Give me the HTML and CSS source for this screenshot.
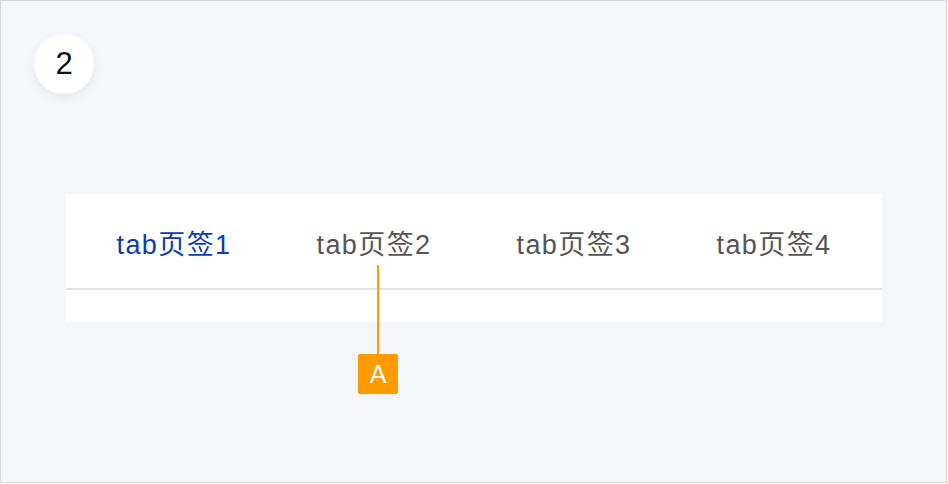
FILE: index.html
```html
<!DOCTYPE html>
<html lang="zh">
<head>
<meta charset="utf-8">
<link rel="stylesheet" href="styles.css">
</head>
<body>
<div class="frame">
  <div class="step">2</div>
  <div class="panel">
    <div class="tabs">
      <div class="tab active">tab页签1</div>
      <div class="tab">tab页签2</div>
      <div class="tab">tab页签3</div>
      <div class="tab">tab页签4</div>
    </div>
    <div class="panel-body"></div>
    <div class="marker">
      <div class="marker-line"></div>
      <div class="marker-tag">A</div>
    </div>
  </div>
</div>
</body>
</html>
```

FILE: styles.css
```css
html, body {
  margin: 0;
  padding: 0;
}
body {
  font-family: "Liberation Sans", "Noto Sans CJK SC", sans-serif;
}
.frame {
  box-sizing: border-box;
  width: 947px;
  height: 483px;
  border: 1px solid #d9d9dd;
  background: #f5f6fa;
  padding: 33px 0 0 33px;
}
.step {
  width: 60px;
  height: 60px;
  border-radius: 50%;
  background: #fff;
  box-shadow: 0 4px 12px rgba(0, 0, 0, 0.06);
  display: flex;
  align-items: center;
  justify-content: center;
  font-size: 31px;
  color: #111;
}
.panel {
  position: relative;
  margin: 100px 0 0 32px;
  width: 816px;
  background: #fff;
}
.tabs {
  display: flex;
  height: 94px;
  padding-left: 8px;
  border-bottom: 2px solid #e3e3e3;
}
.tab {
  width: 200px;
  display: flex;
  align-items: center;
  justify-content: center;
  font-size: 27px;
  letter-spacing: 1.4px;
  color: #555;
  padding-top: 2px;
}
.tab.active {
  color: #0a3db4;
}
.panel-body {
  height: 32px;
}
.marker {
  position: absolute;
  left: 292px;
  top: 71px;
  width: 40px;
  display: flex;
  flex-direction: column;
  align-items: center;
}
.marker-line {
  width: 2px;
  height: 89px;
  background: #ff9a00;
}
.marker-tag {
  width: 40px;
  height: 40px;
  border-radius: 2px;
  background: #ff9a00;
  color: #fff;
  font-size: 25px;
  display: flex;
  align-items: center;
  justify-content: center;
}
```
